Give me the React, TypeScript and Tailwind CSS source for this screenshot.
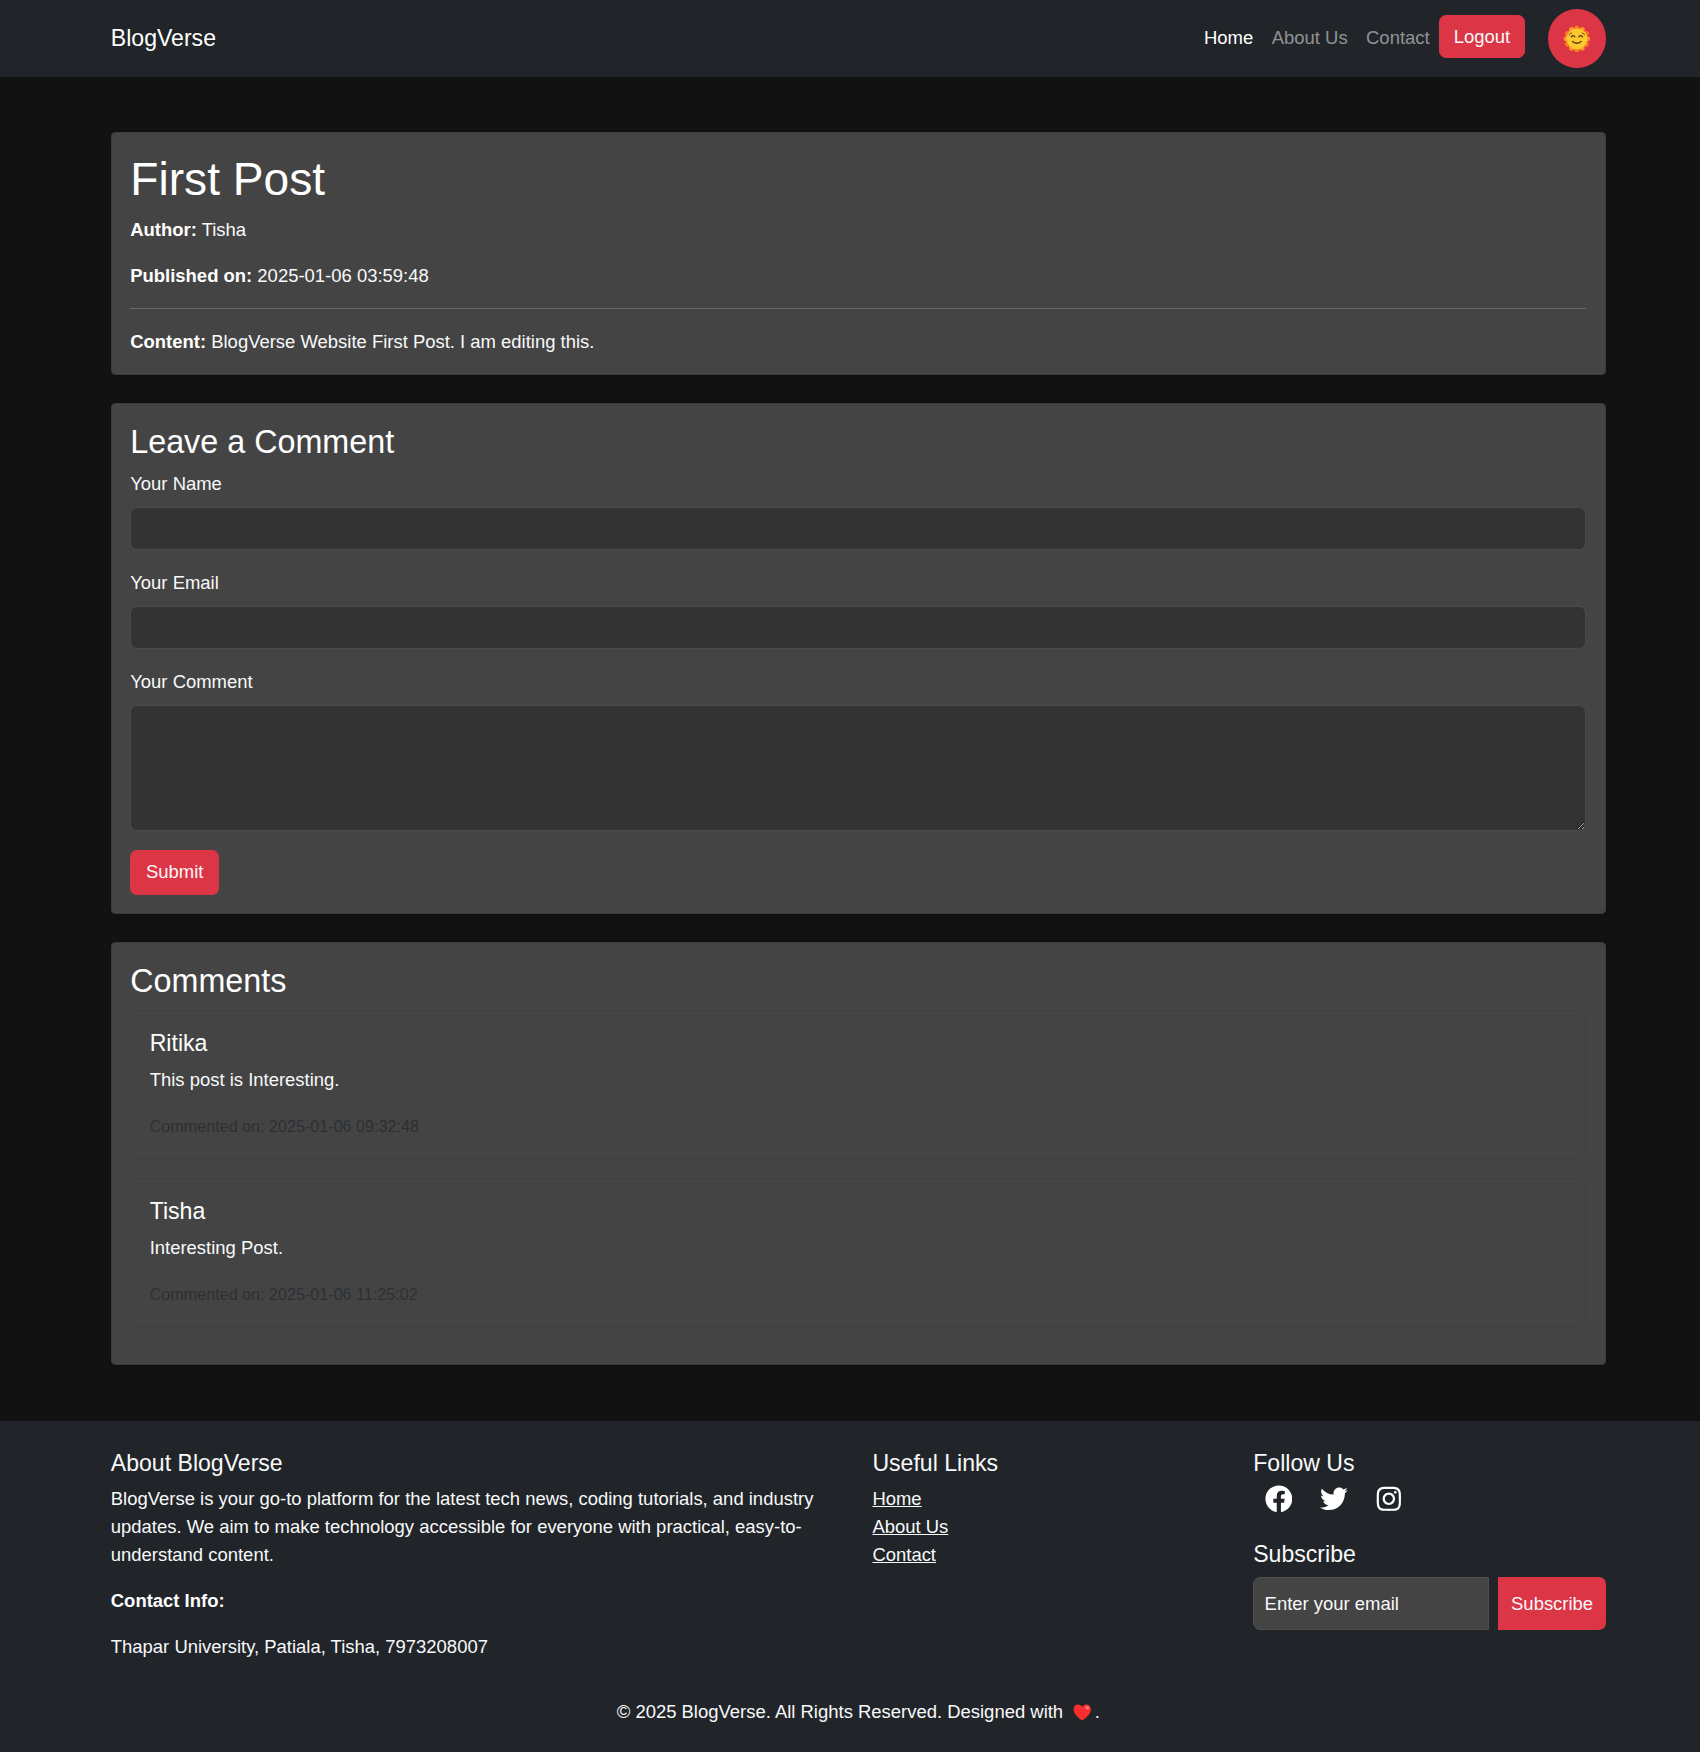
import type { ReactNode } from "react";
import { FaInstagram, FaTwitter } from "react-icons/fa6";
import { FaFacebook } from "react-icons/fa";

const comments = [
  { name: "Ritika", text: "This post is Interesting.", date: "2025-01-06 09:32:48" },
  { name: "Tisha", text: "Interesting Post.", date: "2025-01-06 11:25:02" },
];

function SunIcon() {
  const petals = Array.from({ length: 12 }, (_, i) => (i * Math.PI) / 6);
  return (
    <svg viewBox="0 0 32 32" className="size-6">
      {petals.map((a, i) => (
        <circle
          key={i}
          cx={16 + 12.2 * Math.sin(a)}
          cy={16 - 12.2 * Math.cos(a)}
          r="3"
          fill={i % 2 ? "#fb962a" : "#f9801f"}
        />
      ))}
      <circle cx="16" cy="16" r="12" fill="#fdc92f" />
      <g fill="none" stroke="#4a3312" strokeWidth="1.6" strokeLinecap="round">
        <path d="M9.6 13.600c.8-1.800 3.200-1.800 4 0" />
        <path d="M18.400 13.600c.8-1.800 3.200-1.800 4 0" />
        <path d="M11 19c2.200 2.800 7.800 2.800 10 0" />
        <path d="M7.200 11.400c.5-1.200 1.400-1.900 2.600-2.100M24.800 11.400c-.5-1.200-1.400-1.900-2.600-2.100" strokeWidth="1.100" />
      </g>
    </svg>
  );
}

function HeartIcon() {
  return (
    <svg viewBox="0 0 32 32" className="ml-1 mr-[3px] inline-block size-4 align-[-3px]">
      <path
        d="M16 30.500C10 26.500 1 19.500 1 11 1 6 4.500 2.500 8.800 2.500c3.200 0 5.800 1.700 7.200 4.400 1.400-2.700 4-4.400 7.200-4.400C27.500 2.500 31 6 31 11c0 8.500-9 15.500-15 19.500z"
        fill="#f92f2f"
      />
      <ellipse cx="24.800" cy="8.500" rx="3.200" ry="2.600" fill="#ff7f8e" transform="rotate(35 24.800 8.500)" />
    </svg>
  );
}

function Card({ className = "", children }: { className?: string; children: ReactNode }) {
  return (
    <section
      className={`rounded border border-[#3c3c3c] bg-[#444] p-4 shadow-[0_2px_4px_rgba(0,0,0,0.075)] ${className}`}
    >
      {children}
    </section>
  );
}

const field = "block w-full rounded-md border border-[#4b4b4b] bg-[#333] px-3 py-1.5 text-white outline-none";

export default function App() {
  return (
    <div className="h-[1752px] overflow-hidden bg-[#212529]">
      <div className="bg-[#121212] font-['Liberation_Sans',Arial,sans-serif] text-base/6 text-[#f8f9fa] [zoom:1.154]">
        <nav className="bg-[#212529]">
          <div className="ml-24 flex h-[66.500px] w-[1295.500px] items-center justify-between">
            <a className="text-xl text-white">BlogVerse</a>
            <div className="flex items-center">
              <a className="mb-px px-2 text-white">Home</a>
              <a className="mb-px px-2 text-white/50">About Us</a>
              <a className="mb-px px-2 text-white/50">Contact</a>
              <button className="mb-[3px] rounded-md border border-[#dc3545] bg-[#dc3545] px-3 py-1.5">Logout</button>
              <button className="ml-5 flex h-[50.500px] w-[50px] items-center justify-center rounded-full bg-[#dc3545]">
                <SunIcon />
              </button>
            </div>
          </div>
        </nav>

        <main className="ml-24 w-[1295.500px] py-12">
          <Card className="mb-6">
            <h1 className="mb-2 text-[40px]/[48px] text-white">First Post</h1>
            <p className="mb-4">
              <strong className="text-white">Author:</strong> Tisha
            </p>
            <p>
              <strong className="text-white">Published on:</strong> 2025-01-06 03:59:48
            </p>
            <hr className="mb-[16.500px] mt-[15.500px] border-[#676767]" />
            <p>
              <strong className="text-white">Content:</strong> BlogVerse Website First Post. I am editing this.
            </p>
          </Card>

          <Card className="mb-6">
            <h3 className="mb-[7px] pt-px text-[28px]/[33.600px] text-white">Leave a Comment</h3>
            <label className="mb-2 block">Your Name</label>
            <input className={`${field} mb-[16.500px] h-[37.200px]`} />
            <label className="mb-2 block">Your Email</label>
            <input className={`${field} mb-[16.500px] h-[37.200px]`} />
            <label className="mb-2 block">Your Comment</label>
            <textarea className={`${field} mb-[16.700px] h-[109px] resize-y`} />
            <button className="block h-[39px] w-[77px] rounded-md bg-[#dc3545] pb-px">Submit</button>
          </Card>

          <Card>
            <h3 className="mb-2 text-[28px]/[33.600px] text-white">Comments</h3>
            {comments.map((c) => (
              <article key={c.date} className="mb-4 rounded-md border border-[#3e3f40] p-4">
                <h5 className="mb-[7px] pt-px text-xl/6 text-white">{c.name}</h5>
                <p className="mb-[17px]">{c.text}</p>
                <p className="-mb-px text-sm/6 text-[#2c3034]">Commented on: {c.date}</p>
              </article>
            ))}
          </Card>
        </main>

        <footer className="bg-[#212529] pb-6 pt-6">
          <div className="ml-24 w-[1295.500px]">
            <div className="grid grid-cols-[636px_306px_305.500px] gap-x-6">
              <div>
                <h5 className="mb-[7px] pt-px text-xl/6">About BlogVerse</h5>
                <p className="mb-4">
                  BlogVerse is your go-to platform for the latest tech news, coding tutorials, and industry updates. We
                  aim to make technology accessible for everyone with practical, easy-to-understand content.
                </p>
                <p className="mb-4">
                  <strong className="text-white">Contact Info:</strong>
                </p>
                <p className="mb-4">Thapar University, Patiala, Tisha, 7973208007</p>
              </div>
              <div>
                <h5 className="mb-[7px] pt-px text-xl/6">Useful Links</h5>
                <ul>
                  <li><a className="underline">Home</a></li>
                  <li><a className="underline">About Us</a></li>
                  <li><a className="underline">Contact</a></li>
                </ul>
              </div>
              <div>
                <h5 className="mb-[7px] pt-px text-xl/6">Follow Us</h5>
                <div className="mb-6 flex h-6 items-center gap-6 pl-2.5 text-2xl text-white">
                  <FaFacebook />
                  <FaTwitter />
                  <FaInstagram />
                </div>
                <h5 className="mb-[7.500px] text-xl/6">Subscribe</h5>
                <div className="flex h-[46px] justify-between">
                  <input
                    placeholder="Enter your email"
                    className="w-[204px] rounded-l-md border border-[#4f4f4f] bg-[#444] px-[9px] outline-none placeholder:text-[#f8f9fa]"
                  />
                  <button className="w-[93px] rounded-r-md bg-[#dc3545]">Subscribe</button>
                </div>
              </div>
            </div>
            <p className="mt-4 text-center">
              © 2025 BlogVerse. All Rights Reserved. Designed with <HeartIcon />.
            </p>
          </div>
        </footer>
      </div>
    </div>
  );
}
